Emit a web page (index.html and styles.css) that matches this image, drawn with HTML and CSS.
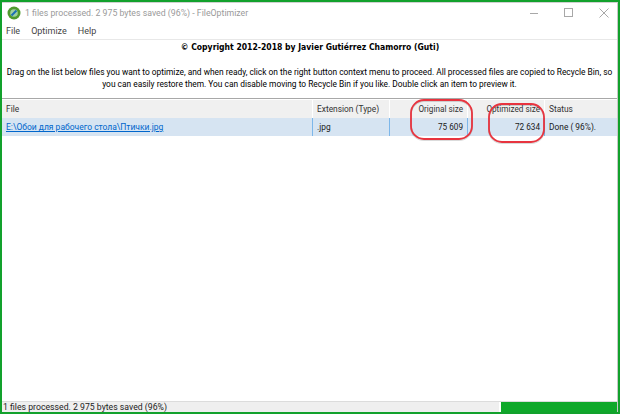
FILE: index.html
```html
<!DOCTYPE html>
<html lang="en">
<head>
<meta charset="utf-8">
<title>FileOptimizer</title>
<link rel="stylesheet" href="styles.css">
</head>
<body>
<div class="frame">
  <div class="window">
    <header class="titlebar">
      <svg class="app-icon" width="14" height="14" viewBox="0 0 14 14"><circle cx="7" cy="7" r="6.5" fill="#4f9a2e"/><circle cx="7" cy="7" r="3.8" fill="#9fd0a0"/><path d="M4.5 9.5 9.5 4.5" stroke="#1c6fb5" stroke-width="2"/></svg>
      <span class="title">1 files processed. 2 975 bytes saved (96%) - FileOptimizer</span>
      <div class="controls">
        <svg class="ctl ctl-min" width="10" height="10" viewBox="0 0 10 10"><path d="M1 5.5H9" stroke="#a8a8a8"/></svg>
        <svg class="ctl ctl-max" width="10" height="10" viewBox="0 0 10 10"><rect x=".5" y=".5" width="8" height="8" fill="none" stroke="#a8a8a8"/></svg>
        <svg class="ctl" width="10" height="10" viewBox="0 0 10 10"><path d="M.5.5 9.5 9.5M9.5.5.5 9.5" stroke="#a8a8a8"/></svg>
      </div>
    </header>
    <nav class="menu"><span>File</span><span>Optimize</span><span>Help</span></nav>
    <section class="info">
      <p class="copyright">© Copyright 2012-2018 by Javier Gutiérrez Chamorro (Guti)</p>
      <p class="help">Drag on the list below files you want to optimize, and when ready, click on the right button context menu to proceed. All processed files are copied to Recycle Bin, so you can easily restore them. You can disable moving to Recycle Bin if you like. Double click an item to preview it.</p>
    </section>
    <main class="list">
      <div class="row head">
        <div class="cell">File</div>
        <div class="cell">Extension (Type)</div>
        <div class="cell num">Original size</div>
        <div class="cell num">Optimized size</div>
        <div class="cell">Status</div>
      </div>
      <div class="row item">
        <div class="cell"><a class="link">E:\Обои для рабочего стола\Птички.jpg</a></div>
        <div class="cell">.jpg</div>
        <div class="cell num">75 609</div>
        <div class="cell num">72 634</div>
        <div class="cell">Done ( 96%).</div>
      </div>
    </main>
    <footer class="status">
      <div class="status-text">1 files processed. 2 975 bytes saved (96%)</div>
      <div class="progress"></div>
    </footer>
  </div>
  <svg class="marks" width="620" height="414" viewBox="0 0 620 414">
    <rect class="mark-shadow" x="411" y="101" width="61" height="39" rx="13"/>
    <rect class="mark-shadow" x="489" y="105" width="55" height="38" rx="13"/>
    <rect class="mark" x="411" y="100" width="61" height="39" rx="13"/>
    <rect class="mark" x="489" y="104" width="55" height="38" rx="13"/>
  </svg>
</div>
</body>
</html>
```
FILE: styles.css
```css
* { box-sizing: border-box; }
html, body { margin: 0; padding: 0; }
body { width: 620px; height: 414px; overflow: hidden; font-family: Roboto, "Noto Sans", sans-serif; font-size: 8.4px; color: #1a1a1a; }
.frame { position: relative; width: 620px; height: 414px; border: 2px solid #12a12c; background: #fff; }
.window { display: flex; flex-direction: column; height: 100%; border-right: 1px solid #c8c8c8; border-top: 1px solid #d0d0d0; background: #fff; }
.titlebar { display: flex; align-items: center; height: 19px; padding-left: 5px; flex: none; }
.app-icon { flex: none; margin-right: 4px; }
.title { font-size: 8.75px; color: #9a9a9a; white-space: nowrap; }
.controls { margin-left: auto; display: flex; gap: 25px; padding-right: 8px; }
.menu { display: flex; gap: 11px; height: 18px; padding-left: 4px; align-items: center; flex: none; font-size: 9px; color: #444; border-bottom: 1px solid #e8e8e8; }
.info { flex: none; height: 58px; text-align: center; color: #000; }
.copyright { margin: 0; padding-left: 1px; font-family: "DejaVu Sans Condensed", "DejaVu Sans", sans-serif; font-weight: bold; font-size: 8.55px; line-height: 15px; }
.help { margin: 11px 0 0; padding: 0 3px; font-size: 8.4px; line-height: 12px; }
.list { flex: 1; border-top: 1px solid #a8a8a8; }
.row { display: grid; grid-template-columns: 311px 77px 78px 77px 1fr; height: 18px; align-items: center; }
.head { background: #f0f0f0; margin-top: 1px; }
.item { background: #d6e4f2; }
.cell { padding: 0 4px; white-space: nowrap; height: 100%; line-height: 18px; overflow: hidden; font-size: 8.4px; }
.head .cell { border-right: 1px solid #fff; color: #333; }
.item .cell { border-right: 1px solid #7db7ea; }
.item .cell:last-child, .head .cell:last-child { border-right: 0; }
.cell.num { text-align: right; font-size: 8.2px; }
.link { color: #0066cc; text-decoration: underline; font-size: 8.5px; }
.status { flex: none; display: flex; height: 11px; background: #efefef; border-top: 1px solid #dcdcdc; }
.status-text { flex: 1; padding-left: 1px; line-height: 11px; color: #222; font-size: 8.7px; white-space: nowrap; }
.progress { width: 118px; background: #0fa82a; border-left: 2px solid #fff; }
.marks { position: absolute; left: -2px; top: -2px; pointer-events: none; }
.mark { fill: none; stroke: #e8343f; stroke-width: 1.8; }
.mark-shadow { fill: none; stroke: #000; stroke-opacity: .14; stroke-width: 2; }
```
